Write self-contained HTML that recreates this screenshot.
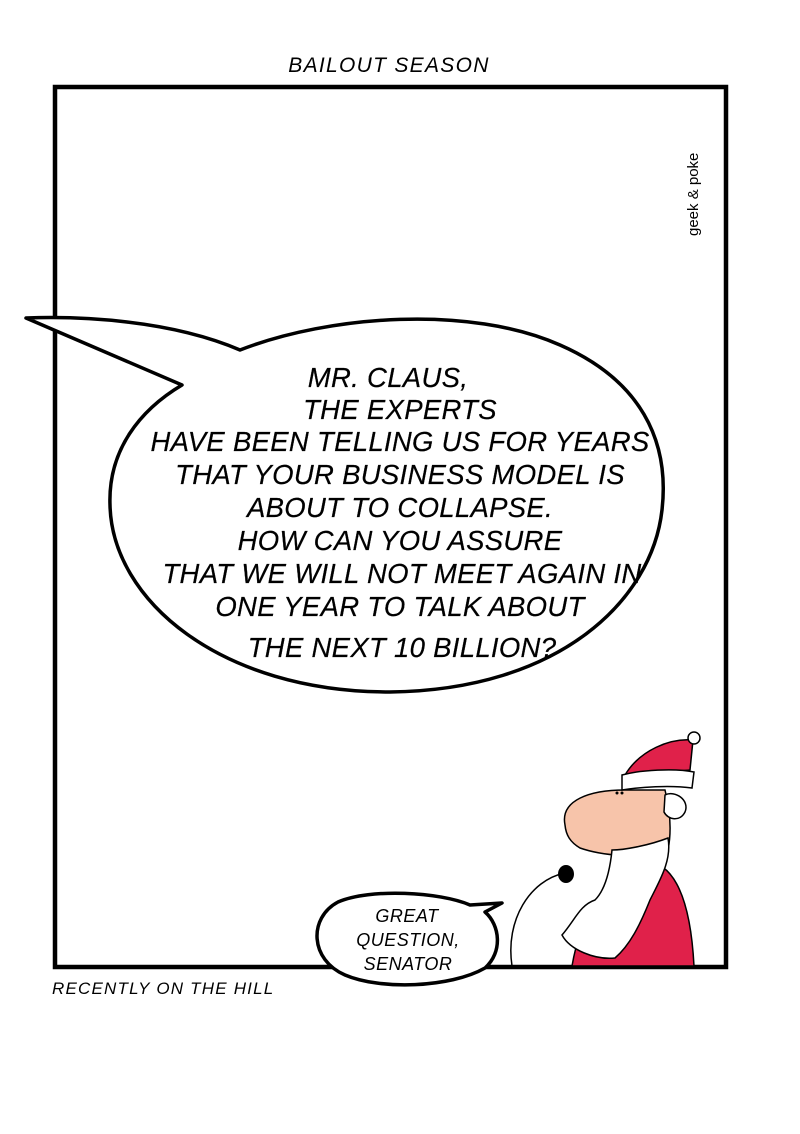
<!DOCTYPE html>
<html><head><meta charset="utf-8"><style>
html,body{margin:0;padding:0;background:#fff;}
svg{display:block}
text{font-family:"Liberation Sans","DejaVu Sans",sans-serif;font-style:italic;fill:#000}
</style></head><body>
<svg width="800" height="1134" viewBox="0 0 800 1134">
<rect width="800" height="1134" fill="#fff"/>
<text x="389" y="72" font-size="21" text-anchor="middle" letter-spacing="1.3">BAILOUT SEASON</text>
<rect x="55" y="87" width="671" height="880" fill="none" stroke="#000" stroke-width="4.5"/>
<text x="52" y="994" font-size="17" letter-spacing="1.2">RECENTLY ON THE HILL</text>
<text transform="translate(698,236) rotate(-90)" font-size="15" style="font-style:normal">geek &amp; poke</text>
<path d="M240,350 C330,315 470,305 560,345 C640,380 670,440 662,510 C652,600 560,690 390,692 C220,692 112,600 110,505 C108,450 140,410 182,385 L26,318 C80,316 170,320 240,350 Z" fill="#fff" stroke="#000" stroke-width="3.5" stroke-linejoin="round"/>
<g font-size="27.5" text-anchor="middle" letter-spacing="0.3" stroke="#000" stroke-width="0.2">
<text x="388" y="387">MR. CLAUS,</text>
<text x="400" y="419">THE EXPERTS</text>
<text x="400" y="451">HAVE BEEN TELLING US FOR YEARS</text>
<text x="400" y="484">THAT YOUR BUSINESS MODEL IS</text>
<text x="400" y="517">ABOUT TO COLLAPSE.</text>
<text x="400" y="550">HOW CAN YOU ASSURE</text>
<text x="402" y="583">THAT WE WILL NOT MEET AGAIN IN</text>
<text x="400" y="616">ONE YEAR TO TALK ABOUT</text>
<text x="402" y="657">THE NEXT 10 BILLION?</text>
</g>
<path d="M512,966 C505,920 530,880 565,873" fill="none" stroke="#000" stroke-width="1.5"/>
<ellipse cx="566" cy="874" rx="8" ry="9" fill="#000"/>
<path d="M572,966 C580,920 600,880 640,862 C670,858 690,890 694,966 Z" fill="#e0214a" stroke="#000" stroke-width="1.5"/>
<path d="M565,825 C560,800 590,790 625,790 L665,790 C670,810 672,830 668,850 C640,860 600,855 580,848 C570,842 566,835 565,825 Z" fill="#f7c4aa" stroke="#000" stroke-width="1.5"/>
<path d="M612,850 C625,850 650,845 668,838 C672,860 660,880 650,900 C640,925 630,945 615,958 C595,960 570,950 562,935 C575,920 580,905 595,900 C605,890 610,870 612,850 Z" fill="#fff" stroke="#000" stroke-width="1.5"/>
<path d="M665,795 C675,790 690,800 685,812 C680,822 668,820 664,812 Z" fill="#fff" stroke="#000" stroke-width="1.5"/>
<path d="M625,775 C640,750 670,738 693,740 L690,770 C670,772 640,772 625,775 Z" fill="#e0214a" stroke="#000" stroke-width="1.5"/>
<path d="M622,775 C640,770 675,768 694,772 L692,788 C670,785 640,787 622,790 Z" fill="#fff" stroke="#000" stroke-width="1.5"/>
<circle cx="694" cy="738" r="6" fill="#fff" stroke="#000" stroke-width="1.5"/>
<circle cx="617" cy="793" r="1.5" fill="#000"/><circle cx="622" cy="793" r="1.5" fill="#000"/>
<path d="M470,905 C440,892 370,888 338,902 C308,918 310,960 345,975 C380,990 450,988 485,968 C503,952 500,925 485,912 L502,903 Z" fill="#fff" stroke="#000" stroke-width="3.5" stroke-linejoin="round"/>
<g font-size="18" text-anchor="middle" letter-spacing="0.5">
<text x="407" y="922">GREAT</text>
<text x="408" y="946">QUESTION,</text>
<text x="408" y="970">SENATOR</text>
</g>
</svg>
</body></html>
